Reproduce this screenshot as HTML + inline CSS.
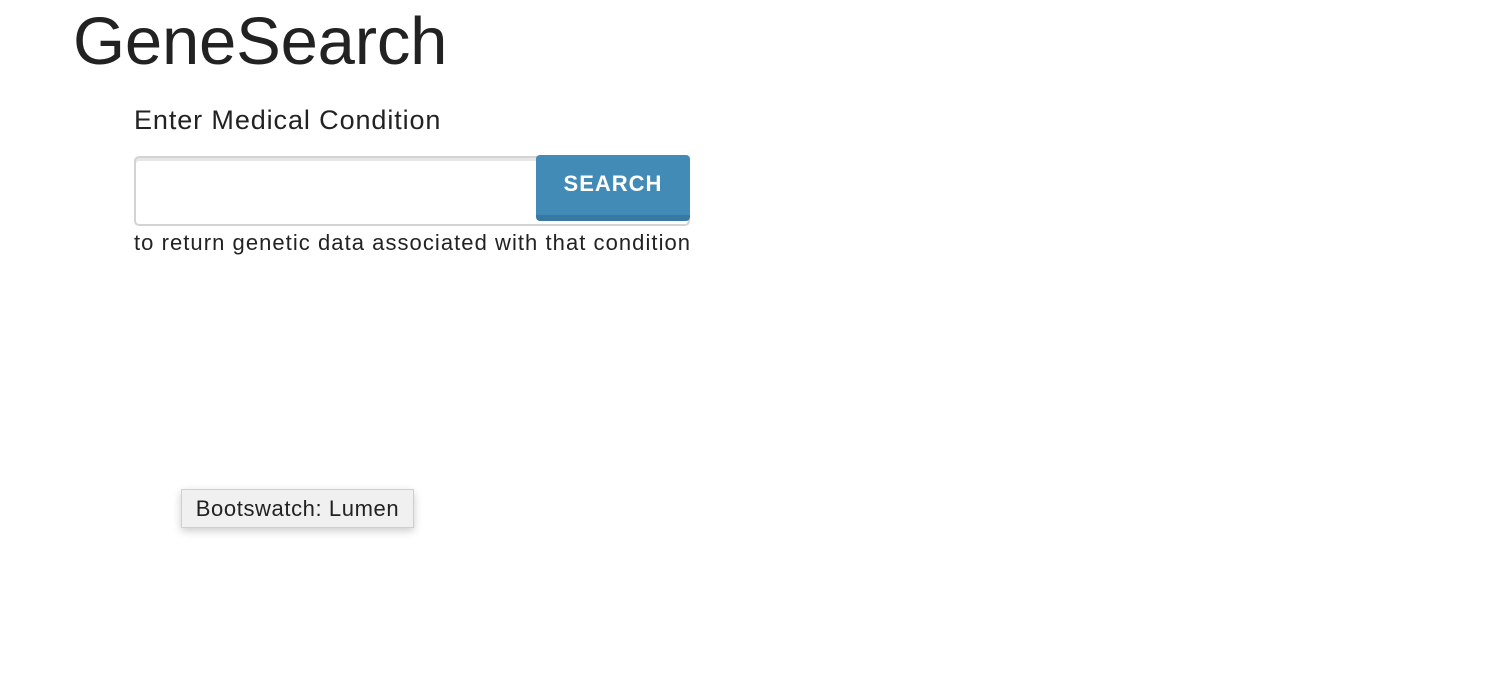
<!DOCTYPE html>
<html><head><meta charset="utf-8"><style>
html,body{margin:0;padding:0;background:#fff;width:1486px;height:674px;overflow:hidden;font-family:"Liberation Sans",sans-serif;color:#222}
h1{position:absolute;left:73px;top:2px;margin:0;font-size:67px;font-weight:400;line-height:80px;letter-spacing:-0.2px}
.lbl{position:absolute;left:134px;top:104px;font-size:27px;line-height:32px;letter-spacing:0.9px}
.inp{position:absolute;left:134px;top:156px;width:552px;height:66px;border:2px solid #d3d3d3;border-radius:5px;box-shadow:inset 0 3px 0 #e6e6e6;background:#fff}
.btn{position:absolute;left:536px;top:155px;width:154px;height:60px;background:#428bb6;border-bottom:6px solid #3779a0;border-radius:4px;color:#fff;font-weight:700;font-size:22px;letter-spacing:1px;text-align:center;line-height:58px}
.help{position:absolute;left:134px;top:229px;font-size:22px;line-height:28px;letter-spacing:1.05px;white-space:nowrap}
.tip{position:absolute;left:181px;top:489px;width:231px;height:37px;background:#f0f0f0;border:1px solid #cfcfcf;box-shadow:0 3px 8px rgba(0,0,0,0.2);font-size:22px;line-height:37px;text-align:center;letter-spacing:0.6px}
</style></head><body>
<h1>GeneSearch</h1>
<div class="lbl">Enter Medical Condition</div>
<div class="inp"></div>
<div class="btn">SEARCH</div>
<div class="help">to return genetic data associated with that condition</div>
<div class="tip">Bootswatch: Lumen</div>
</body></html>
